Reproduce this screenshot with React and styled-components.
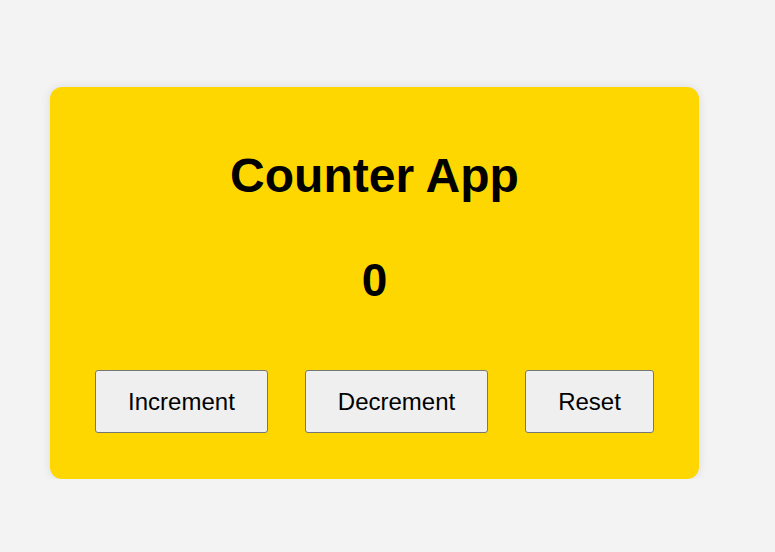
import React, { useState } from "react";
import styled, { createGlobalStyle } from "styled-components";

const Global = createGlobalStyle`
  html, body { margin: 0; padding: 0; background: #f3f3f3; }
  body { font-family: "Liberation Sans", Arial, sans-serif; }
`;

const Page = styled.div`
  padding: 87px 0 0 50px;
`;

const Card = styled.div`
  width: 649px;
  height: 392px;
  box-sizing: border-box;
  background: #ffd700;
  border-radius: 12px;
  box-shadow: 0 0 10px rgba(0, 0, 0, 0.1);
  padding-top: 65px;
  display: flex;
  flex-direction: column;
  align-items: center;
`;

const Title = styled.h1`
  margin: 0;
  font-size: 48px;
  line-height: 48px;
  font-weight: 700;
  color: #000;
`;

const Count = styled.div`
  margin-top: 57px;
  font-size: 46px;
  line-height: 46px;
  font-weight: 700;
  color: #000;
`;

const Buttons = styled.div`
  margin-top: 67px;
  display: flex;
  gap: 37px;
  justify-content: center;
`;

const Button = styled.button`
  box-sizing: border-box;
  height: 63px;
  padding: 0 32px;
  font-family: "Liberation Sans", Arial, sans-serif;
  font-size: 24px;
  color: #000;
  background: #efefef;
  border: 1px solid #767676;
  border-radius: 3px;
  cursor: pointer;
`;

export default function App() {
  const [count, setCount] = useState(0);
  return (
    <>
      <Global />
      <Page>
        <Card>
          <Title>Counter App</Title>
          <Count>{count}</Count>
          <Buttons>
            <Button onClick={() => setCount(count + 1)}>Increment</Button>
            <Button onClick={() => setCount(count - 1)}>Decrement</Button>
            <Button onClick={() => setCount(0)}>Reset</Button>
          </Buttons>
        </Card>
      </Page>
    </>
  );
}
